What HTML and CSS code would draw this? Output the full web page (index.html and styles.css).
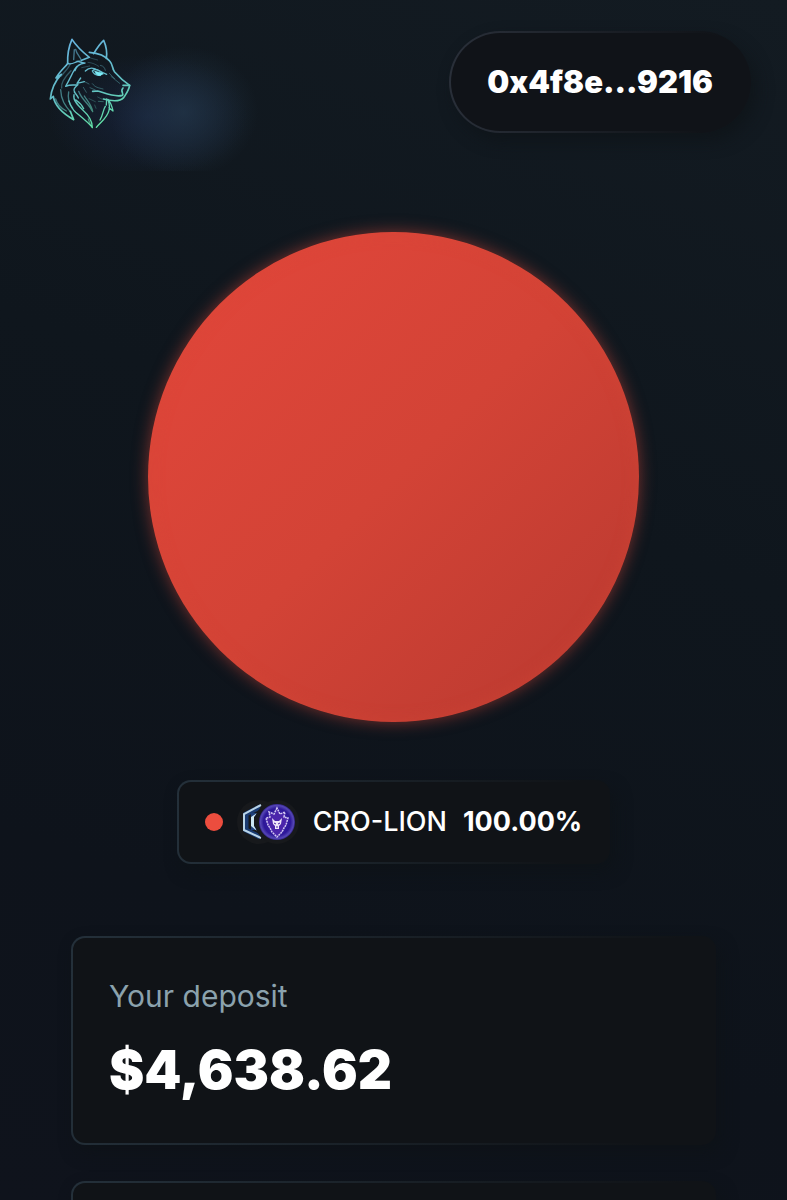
FILE: index.html
```html
<!DOCTYPE html>
<html lang="en">
<head>
<meta charset="utf-8">
<meta name="viewport" content="width=device-width, initial-scale=1">
<title>Your deposit</title>
<link rel="stylesheet" href="styles.css">
</head>
<body>
<div class="app">
  <header class="topbar">
    <a class="logo" href="#" aria-label="Home">
      <svg viewBox="0 0 300 315" fill="none" stroke="url(#wolf)" stroke-width="5" stroke-linecap="round" stroke-linejoin="round">
        <defs>
          <linearGradient id="wolf" gradientUnits="userSpaceOnUse" x1="90" y1="30" x2="180" y2="290">
            <stop offset="0" stop-color="#67b4de"/>
            <stop offset=".55" stop-color="#62bfc6"/>
            <stop offset="1" stop-color="#62e3a4"/>
          </linearGradient>
        </defs>
        <path d="M83 97C82 70 87 45 96 25C111 48 129 64 148 79L125 88"/>
        <path d="M161 68C171 51 181 37 191 28C199 46 202 63 199 82"/>
        <path d="M148 64C174 66 195 73 209 90C219 101 216 112 224 123C237 138 251 151 269 163C267 177 260 186 251 200C240 212 216 211 190 204"/>
        <path d="M249 163L269 163M249 171C239 181 253 188 247 193C224 200 190 184 173 180L158 181"/>
        <path d="M83 97C79 105 59 120 48 141L64 130C45 150 34 173 31 204L40 196C44 227 70 248 101 266L91 241"/>
        <g stroke-width="4">
          <path d="M62 176C63 207 76 225 92 243M47 204C52 222 65 233 79 240" opacity=".6"/>
          <path d="M91 99C83 117 70 125 64 135M93 119C72 140 62 155 65 171" opacity=".4"/>
          <path d="M83 97C94 102 102 95 114 91L131 96"/>
          <path d="M103 56L101 86M107 55C110 71 122 77 124 89L109 91" opacity=".6"/>
          <path d="M135 96C118 98 108 108 105 119M111 106C100 117 96 133 77 166C93 159 102 164 114 161C105 169 98 175 104 183"/>
          <path d="M122 141L111 157L133 152M136 120C148 108 162 111 172 117L200 130"/>
          <path d="M157 120C165 110 181 118 189 129C174 136 163 132 157 120Z"/>
          <path d="M103 183C109 191 113 195 115 201M108 207C120 216 126 222 131 233M102 191C98 207 112 222 129 238C146 253 157 267 157 290C148 277 130 263 107 244C94 232 91 222 87 210"/>
          <path d="M86 183C83 198 86 220 98 231M116 181C124 205 148 220 156 239M133 195C144 212 156 224 158 242M145 264L151 281" opacity=".6"/>
          <path d="M204 205C207 217 211 227 207 238C202 260 184 271 169 289M204 205C211 213 215 220 219 240L207 230M196 226C189 236 190 250 180 267M200 204L199 222"/>
        </g>
        <path d="M165 121L188 127L181 134C173 134 166 130 165 121Z" fill="#7cebf6" stroke="#7cebf6" stroke-width="2"/>
        <path d="M157 158C166 170 175 170 189 174M150 170L166 177M208 127L224 143M218 116L224 123M213 136L239 157M181 103C191 105 194 110 196 118M130 169L139 184M132 151L147 159M175 211L190 212" stroke-width="3" opacity=".4"/>
        <path d="M144 94C159 96 165 99 176 106M147 79C154 83 164 84 173 87M125 110L149 105M147 203L166 212M173 198L185 204M164 222L168 232" stroke-width="3" opacity=".3"/>
      </svg>
    </a>
    <button class="wallet" type="button">0x4f8e...9216</button>
  </header>

  <main class="content">
    <div class="chart" role="img" aria-label="CRO-LION 100.00%"></div>

    <div class="legend surface">
      <span class="dot"></span>
      <svg class="tokens" viewBox="0 0 62 44" aria-hidden="true">
        <defs>
          <radialGradient id="coin" cx=".5" cy=".5" r=".5">
            <stop offset="0" stop-color="#3c20b0"/>
            <stop offset=".75" stop-color="#2d1898"/>
            <stop offset=".92" stop-color="#5546b4"/>
            <stop offset="1" stop-color="#33248c"/>
          </radialGradient>
        </defs>
        <circle cx="22" cy="22" r="22" fill="#17191c"/>
        <path d="M23 7L9 14V30L23 37" fill="none" stroke="#193a70" stroke-width="5"/>
        <path d="M24 5L7 14V30L24 38" fill="none" stroke="#b8d4e8" stroke-width="2"/>
        <path d="M20 13H14V30H20L17 26V17Z" fill="#1d3e78"/>
        <path d="M20 13L14 17V26L20 31L17 26V17Z" fill="#cce7f3"/>
        <circle cx="40" cy="22" r="22" fill="#17191c"/>
        <circle cx="40" cy="22" r="18" fill="url(#coin)"/>
        <path d="M40 8L37 14L32 12L33 17L29 18L31 25L33 28L35 32L40 37L45 32L47 28L49 25L51 18L47 17L48 12L43 14Z" fill="#4b25ab" stroke="#d2c8f2" stroke-width="1.5" stroke-dasharray="2 .7"/>
        <path d="M35 18L38 21H42L45 18L44 24L42 26V29H38V26L36 24Z" fill="#efe6fa"/>
        <path d="M37 23L39 24M43 23L41 24M39 27H41" stroke="#4723a5" stroke-width="1"/>
      </svg>
      <span class="pair">CRO-LION</span>
      <strong class="share">100.00%</strong>
    </div>

    <section class="card surface">
      <h2 class="label">Your deposit</h2>
      <p class="amount">$4,638.62</p>
    </section>
    <section class="card surface"></section>
  </main>
</div>
</body>
</html>
```
FILE: styles.css
```css
* {
  box-sizing: border-box;
}

body {
  margin: 0;
  background: #0f141b;
  color: #fff;
  font-family: Inter, "Liberation Sans", sans-serif;
}

.app {
  height: 100vh;
  overflow: hidden;
  background: linear-gradient(200deg, #131b22 0%, #0f161d 40%, #0e131b 75%, #0f131c 100%);
}

.topbar {
  display: flex;
  justify-content: space-between;
  align-items: flex-start;
  height: 171px;
  padding: 31px 36px 0 40px;
  background:
    radial-gradient(ellipse 74px 66px at 184px 112px, rgba(38, 60, 80, .6), rgba(38, 60, 80, .3) 50%, transparent),
    radial-gradient(ellipse 100px 62px at 148px 116px, rgba(28, 42, 80, .5), rgba(28, 42, 80, .25) 50%, transparent);
}

.logo {
  display: block;
  width: 100px;
}

.logo svg {
  display: block;
  width: 100%;
}

.wallet {
  height: 102px;
  padding: 0 36px;
  border: 2px solid transparent;
  border-radius: 51px;
  background:
    linear-gradient(#101318, #101318) padding-box,
    linear-gradient(100deg, #2a303a, #101318 85%) border-box;
  box-shadow: 6px 8px 16px rgba(14, 18, 22, .6);
  color: #fff;
  font: 900 31px/36px Inter, "Liberation Sans", sans-serif;
}

.content {
  display: flex;
  flex-direction: column;
  align-items: center;
  padding: 61px 71px 0;
}

.chart {
  width: 76%;
  aspect-ratio: 1;
  border-radius: 50%;
  background: linear-gradient(135deg, #e0463a 10%, #d34336 50%, #bd3b31 90%);
  box-shadow:
    0 0 16px rgba(231, 76, 60, .5),
    inset 0 0 16px rgba(216, 72, 56, .4);
}

.surface {
  border: 2px solid transparent;
  border-radius: 14px;
  background:
    linear-gradient(#101317, #101317) padding-box,
    linear-gradient(100deg, #24303a, #101317 90%) border-box;
  box-shadow: 5px 8px 16px rgba(13, 18, 22, .6);
}

.legend {
  display: flex;
  align-items: center;
  height: 84px;
  margin: 58px 0 72px;
  padding: 0 26px;
  font-size: 27px;
  line-height: 32px;
}

.dot {
  width: 18px;
  height: 18px;
  margin-right: 14px;
  border-radius: 50%;
  background: #ec4d3e;
}

.tokens {
  width: 62px;
  height: 44px;
  margin-right: 14px;
}

.pair {
  margin-right: 16px;
  font-weight: 500;
}

.share {
  font-weight: 700;
}

.card {
  width: 100%;
  min-height: 209px;
  margin-bottom: 36px;
  padding: 38px 36px 34px;
}

.label {
  margin: 0 0 16px;
  color: #8ba2ad;
  font-weight: 400;
  font-size: 30px;
  line-height: 40px;
}

.amount {
  margin: 0;
  font-weight: 900;
  font-size: 53px;
  line-height: 76px;
}
```
